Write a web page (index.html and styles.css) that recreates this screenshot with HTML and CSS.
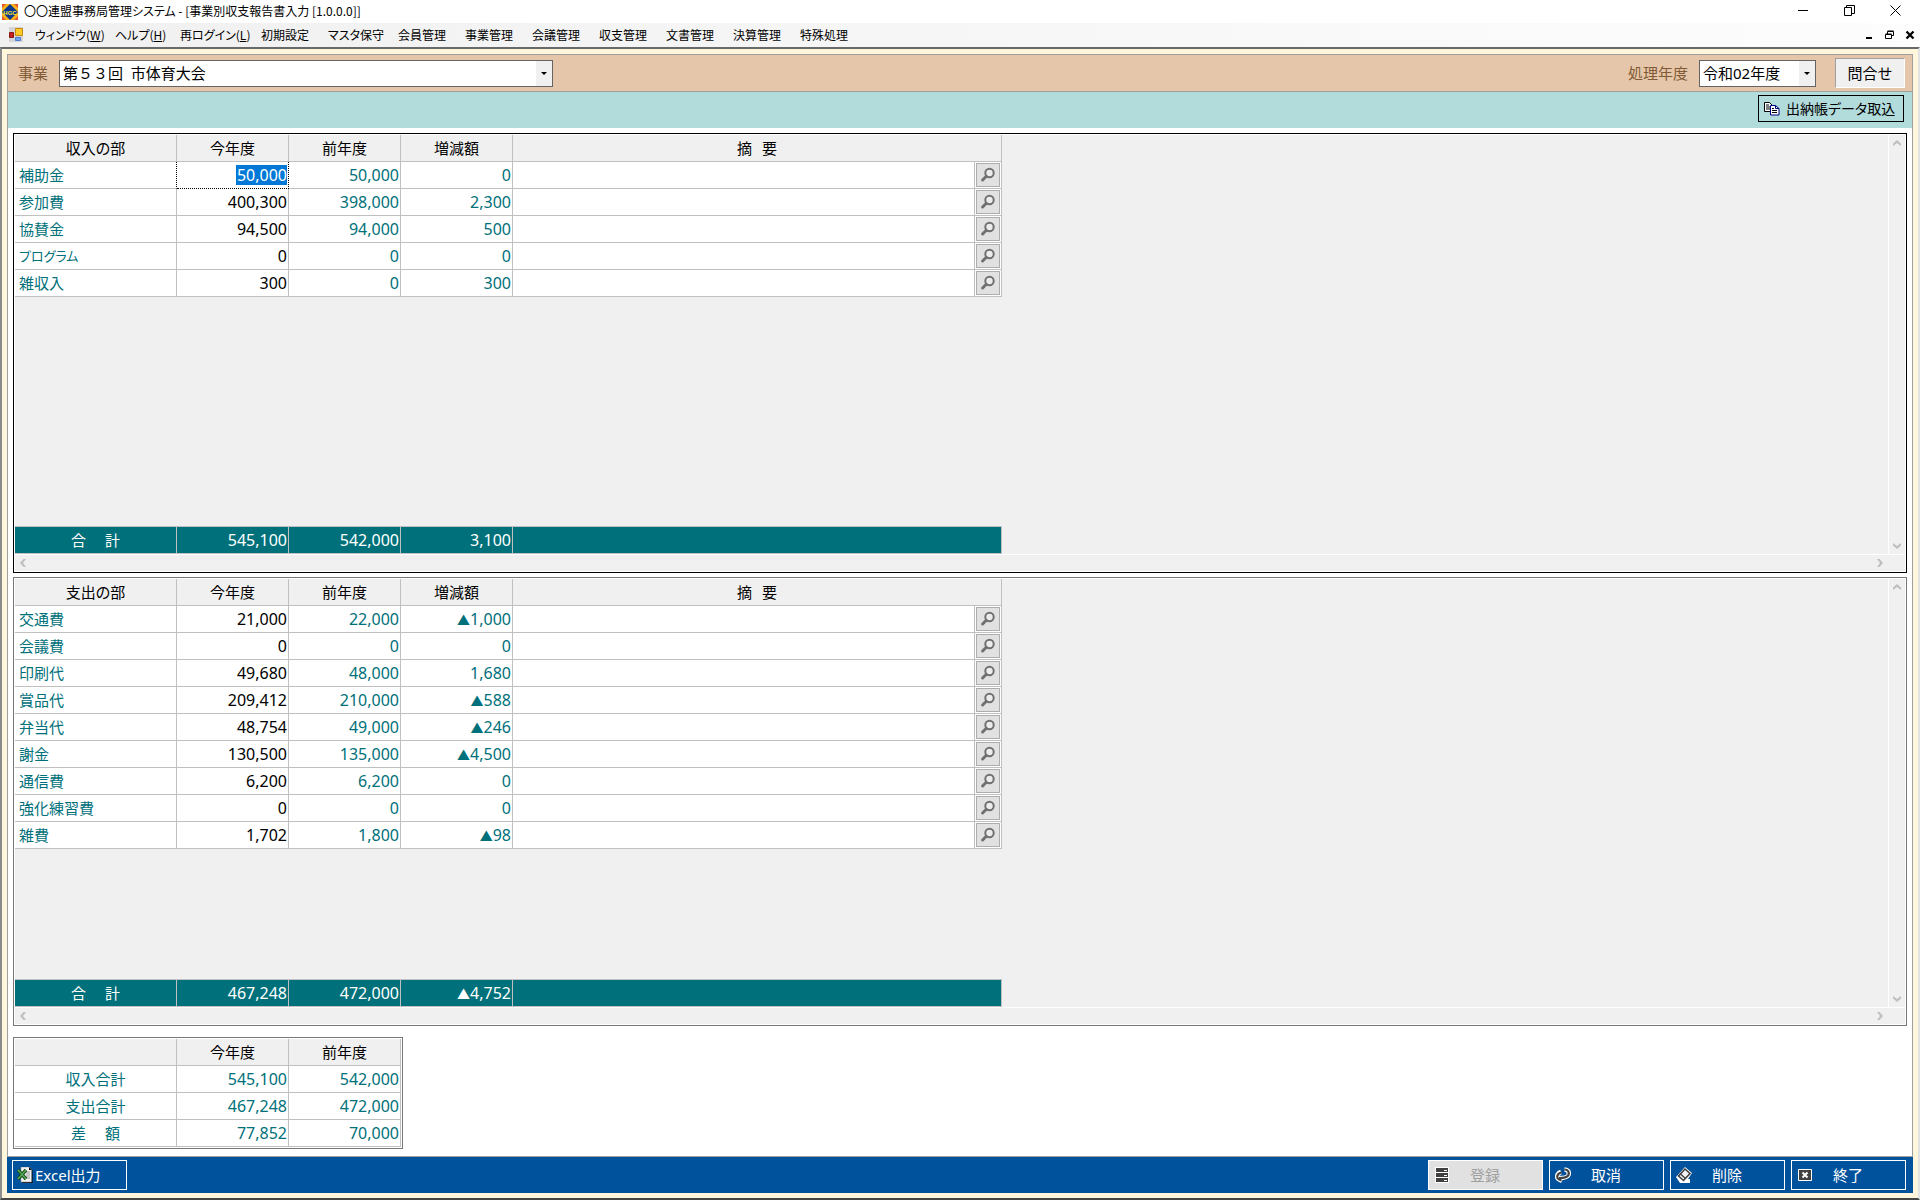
FILE: index.html
```html
<!DOCTYPE html>
<html lang="ja">
<head>
<meta charset="utf-8">
<meta name="viewport" content="width=device-width, initial-scale=1">
<title>〇〇連盟事務局管理システム</title>
<link rel="stylesheet" href="styles.css">
</head>
<body>
<svg class="defs" aria-hidden="true">
  <symbol id="lens" viewBox="0 0 22 22"><circle cx="12.5" cy="9" r="4.2" fill="#ececec" stroke="#707070" stroke-width="2"/><path d="M9.3 12.3 5.6 16" stroke="#707070" stroke-width="3" stroke-linecap="round"/></symbol>
  <symbol id="up" viewBox="0 0 16 16"><path d="M4 11V8.500L8 5l4 3.500V11L8 8z" fill="#bfbfbf"/></symbol>
</svg>
<header class="titlebar">
  <svg class="logo" viewBox="0 0 16 16" aria-hidden="true"><rect width="16" height="16" fill="#f6b21c"/><path d="M0 0h4L0 4zM12 0h4v4zM0 12v4h4zM16 12v4h-4z" fill="#e2542c"/><path d="M8 0l8 8-8 8-8-8z" fill="#08388c"/><text x="8" y="10.500" text-anchor="middle" class="logo-text">HGC</text></svg>
  <h1>〇〇連盟事務局管理システム - [事業別収支報告書入力 [1.0.0.0]]</h1>
  <div class="win-buttons">
    <button type="button" aria-label="最小化"><svg viewBox="0 0 11 11"><path d="M0 5.500h10" stroke="#000"/></svg></button>
    <button type="button" aria-label="元に戻す"><svg viewBox="0 0 11 11"><path d="M.5 2.500h7v8h-7zM2.500 2.500v-2h8v8h-3" fill="none" stroke="#000"/></svg></button>
    <button type="button" aria-label="閉じる"><svg viewBox="0 0 11 11"><path d="M.5.5l10 10M10.500.5l-10 10" stroke="#000"/></svg></button>
  </div>
</header>
<nav class="menubar">
  <svg class="form-icon" viewBox="0 0 14 15" aria-hidden="true"><path d="M0 0h14v15H0z" fill="#d4d4d8"/><path d="M6.500 1.500h7v7h-7z" fill="#ffc928" stroke="#c98a10"/><path d="M.5 5.500h4v5h-4z" fill="#c82020" stroke="#8c1414"/><path d="M6.500 10.500h5v3h-5z" fill="#6ea4f0" stroke="#4a7ccc"/></svg>
  <div class="menu">
    <a href="#">ウィンドウ(<u>W</u>)</a><a href="#">ヘルプ(<u>H</u>)</a><a href="#">再ログイン(<u>L</u>)</a><a href="#">初期設定</a><a href="#">マスタ保守</a><a href="#">会員管理</a><a href="#">事業管理</a><a href="#">会議管理</a><a href="#">収支管理</a><a href="#">文書管理</a><a href="#">決算管理</a><a href="#">特殊処理</a>
  </div>
  <div class="child-buttons">
    <button type="button" aria-label="子ウィンドウを最小化"><svg viewBox="0 0 10 10"><path d="M1 8h6" stroke="#000" stroke-width="2"/></svg></button>
    <button type="button" aria-label="子ウィンドウを元に戻す"><svg viewBox="0 0 10 10"><path d="M.5 4.500h6v4h-6zM2.500 4V1.500h6v4H7M.5 4h6M2.500 1h6" fill="none" stroke="#000"/></svg></button>
    <button type="button" aria-label="子ウィンドウを閉じる"><svg viewBox="0 0 10 10"><path d="M1.500 1.500l7 7M8.500 1.500l-7 7" stroke="#000" stroke-width="2.300"/></svg></button>
  </div>
</nav>
<div class="frame">
<div class="form">
  <div class="filter">
    <label for="project">事業</label>
    <span class="combo combo-project"><select id="project"><option>第５３回&nbsp;&nbsp;市体育大会</option></select><span class="drop"></span></span>
    <label class="year-label" for="year">処理年度</label>
    <span class="combo combo-year"><select id="year"><option>令和02年度</option></select><span class="drop"></span></span>
    <button type="button" class="inquiry">問合せ</button>
  </div>
  <div class="tools">
    <button type="button" class="import"><svg viewBox="0 0 16 14" aria-hidden="true"><path d="M.5.5h5l3 3v6h-8z" fill="#fff" stroke="#000"/><path d="M2 3h3M2 5h4M2 7h4" stroke="#000"/><path d="M6.500 3.500h5l3.500 3v6.500H6.500z" fill="#fff" stroke="#000080"/><path d="M11.500 3.500v3H15" fill="none" stroke="#000080"/><path d="M8 6.500h2M8 8.500h5M8 10.500h5" stroke="#000"/></svg>出納帳データ取込</button>
  </div>
  <main>
    <section class="panel panel-income">
      <div class="sheet">
        <table class="ledger">
          <colgroup><col class="c-name"><col class="c-num"><col class="c-num"><col class="c-num"><col class="c-note"><col class="c-find"></colgroup>
          <thead><tr><th class="kana">収入の部</th><th>今年度</th><th>前年度</th><th>増減額</th><th colspan="2" class="wide">摘<span></span>要</th></tr></thead>
          <tbody>
            <tr><th scope="row">補助金</th><td class="current"><input class="selected" aria-label="補助金" value="50,000"></td><td>50,000</td><td>0</td><td><input aria-label="摘要"></td><td class="find"><button type="button" aria-label="検索"><svg><use href="#lens"/></svg></button></td></tr>
            <tr><th scope="row">参加費</th><td><input aria-label="参加費" value="400,300"></td><td>398,000</td><td>2,300</td><td><input aria-label="摘要"></td><td class="find"><button type="button" aria-label="検索"><svg><use href="#lens"/></svg></button></td></tr>
            <tr><th scope="row">協賛金</th><td><input aria-label="協賛金" value="94,500"></td><td>94,000</td><td>500</td><td><input aria-label="摘要"></td><td class="find"><button type="button" aria-label="検索"><svg><use href="#lens"/></svg></button></td></tr>
            <tr><th scope="row" class="kana small">プログラム</th><td><input aria-label="プログラム" value="0"></td><td>0</td><td>0</td><td><input aria-label="摘要"></td><td class="find"><button type="button" aria-label="検索"><svg><use href="#lens"/></svg></button></td></tr>
            <tr><th scope="row">雑収入</th><td><input aria-label="雑収入" value="300"></td><td>0</td><td>300</td><td><input aria-label="摘要"></td><td class="find"><button type="button" aria-label="検索"><svg><use href="#lens"/></svg></button></td></tr>
          </tbody>
        </table>
        <table class="ledger total">
          <colgroup><col class="c-name"><col class="c-num"><col class="c-num"><col class="c-num"><col class="c-note"><col class="c-find"></colgroup>
          <tbody><tr><th scope="row" class="wider">合<span></span>計</th><td>545,100</td><td>542,000</td><td>3,100</td><td colspan="2"></td></tr></tbody>
        </table>
      </div>
      <div class="vbar"><svg><use href="#up"/></svg><svg class="down"><use href="#up"/></svg></div>
      <div class="hbar"><svg class="left"><use href="#up"/></svg><svg class="right"><use href="#up"/></svg></div>
    </section>
    <section class="panel panel-expense">
      <div class="sheet">
        <table class="ledger">
          <colgroup><col class="c-name"><col class="c-num"><col class="c-num"><col class="c-num"><col class="c-note"><col class="c-find"></colgroup>
          <thead><tr><th class="kana">支出の部</th><th>今年度</th><th>前年度</th><th>増減額</th><th colspan="2" class="wide">摘<span></span>要</th></tr></thead>
          <tbody>
            <tr><th scope="row">交通費</th><td><input aria-label="交通費" value="21,000"></td><td>22,000</td><td><i>▲</i>1,000</td><td><input aria-label="摘要"></td><td class="find"><button type="button" aria-label="検索"><svg><use href="#lens"/></svg></button></td></tr>
            <tr><th scope="row">会議費</th><td><input aria-label="会議費" value="0"></td><td>0</td><td>0</td><td><input aria-label="摘要"></td><td class="find"><button type="button" aria-label="検索"><svg><use href="#lens"/></svg></button></td></tr>
            <tr><th scope="row">印刷代</th><td><input aria-label="印刷代" value="49,680"></td><td>48,000</td><td>1,680</td><td><input aria-label="摘要"></td><td class="find"><button type="button" aria-label="検索"><svg><use href="#lens"/></svg></button></td></tr>
            <tr><th scope="row">賞品代</th><td><input aria-label="賞品代" value="209,412"></td><td>210,000</td><td><i>▲</i>588</td><td><input aria-label="摘要"></td><td class="find"><button type="button" aria-label="検索"><svg><use href="#lens"/></svg></button></td></tr>
            <tr><th scope="row">弁当代</th><td><input aria-label="弁当代" value="48,754"></td><td>49,000</td><td><i>▲</i>246</td><td><input aria-label="摘要"></td><td class="find"><button type="button" aria-label="検索"><svg><use href="#lens"/></svg></button></td></tr>
            <tr><th scope="row">謝金</th><td><input aria-label="謝金" value="130,500"></td><td>135,000</td><td><i>▲</i>4,500</td><td><input aria-label="摘要"></td><td class="find"><button type="button" aria-label="検索"><svg><use href="#lens"/></svg></button></td></tr>
            <tr><th scope="row">通信費</th><td><input aria-label="通信費" value="6,200"></td><td>6,200</td><td>0</td><td><input aria-label="摘要"></td><td class="find"><button type="button" aria-label="検索"><svg><use href="#lens"/></svg></button></td></tr>
            <tr><th scope="row">強化練習費</th><td><input aria-label="強化練習費" value="0"></td><td>0</td><td>0</td><td><input aria-label="摘要"></td><td class="find"><button type="button" aria-label="検索"><svg><use href="#lens"/></svg></button></td></tr>
            <tr><th scope="row">雑費</th><td><input aria-label="雑費" value="1,702"></td><td>1,800</td><td><i>▲</i>98</td><td><input aria-label="摘要"></td><td class="find"><button type="button" aria-label="検索"><svg><use href="#lens"/></svg></button></td></tr>
          </tbody>
        </table>
        <table class="ledger total">
          <colgroup><col class="c-name"><col class="c-num"><col class="c-num"><col class="c-num"><col class="c-note"><col class="c-find"></colgroup>
          <tbody><tr><th scope="row" class="wider">合<span></span>計</th><td>467,248</td><td>472,000</td><td><i>▲</i>4,752</td><td colspan="2"></td></tr></tbody>
        </table>
      </div>
      <div class="vbar"><svg><use href="#up"/></svg><svg class="down"><use href="#up"/></svg></div>
      <div class="hbar"><svg class="left"><use href="#up"/></svg><svg class="right"><use href="#up"/></svg></div>
    </section>
    <section class="summary">
      <table class="ledger balance">
        <colgroup><col class="c-name"><col class="c-num"><col class="c-num"></colgroup>
        <thead><tr><th></th><th>今年度</th><th>前年度</th></tr></thead>
        <tbody>
          <tr><th scope="row">収入合計</th><td>545,100</td><td>542,000</td></tr>
          <tr><th scope="row">支出合計</th><td>467,248</td><td>472,000</td></tr>
          <tr><th scope="row" class="wider">差<span></span>額</th><td>77,852</td><td>70,000</td></tr>
        </tbody>
      </table>
    </section>
  </main>
  <footer class="actions">
    <button type="button" class="excel"><svg viewBox="0 0 16 16" aria-hidden="true"><path d="M5 1h8l2.500 2.500V16H5z" fill="#000"/><path d="M4 0h8l2.500 3V15H4z" fill="#f4f4f4" stroke="#999" stroke-width=".6"/><path d="M12 0v3h2.500z" fill="#000"/><path d="M9 5h4M9 7h4M9 9h4M9 11h4" stroke="#999"/><path d="M1 3l8 9M9 3l-8 9" stroke="#154f1c" stroke-width="3.400"/><path d="M1 3l8 9M9 3l-8 9" stroke="#58a858" stroke-width="1.500"/></svg>Excel出力</button>
    <button type="button" class="first" disabled><svg viewBox="0 0 16 16" aria-hidden="true"><path d="M1 0h14v16H1z" fill="#fff"/><path d="M2 1h12v4H2zM2 6h12v4H2zM2 11h12v4H2z" fill="#404040"/><path d="M10 3.500h3M10 8.500h3M10 13.500h3" stroke="#fff"/></svg><span>登録</span></button>
    <button type="button"><svg viewBox="0 0 16 16" aria-hidden="true"><g fill="none" stroke="#fff" stroke-width="4.500"><path d="M9.500 2.500C13 2.500 14.500 5 13.500 8c-1 2.500-4 3-9.500 3"/><path d="M6 5C3 6 1.500 8.500 2.500 11c1 1.500 2.500 2 4.500 3"/></g><g fill="none" stroke="#404040" stroke-width="2.200"><path d="M9.500 2.500C13 2.500 14.500 5 13.500 8c-1 2.500-4 3-9.500 3"/><path d="M6.500 5.500C3.500 6 1.500 8.500 2.500 11c1 1.500 2.500 2 4 2.500"/></g></svg><span>取消</span></button>
    <button type="button"><svg viewBox="0 0 16 16" aria-hidden="true"><path d="M9 0l7 6-4 6h2v4H4L0 10z" fill="#fff"/><path d="M9 2l5 4.500-6.500 7L2.500 9z" fill="#f4f4f4" stroke="#404040" stroke-width="1.600"/><path d="M4.500 7l5 4.500" stroke="#404040" stroke-width="1.400"/></svg><span>削除</span></button>
    <button type="button"><svg viewBox="0 0 16 16" aria-hidden="true"><path d="M1.500 2.500h13v11h-13z" fill="#404040" stroke="#fff"/><path d="M5.500 5.500l5 5M10.500 5.500l-5 5" stroke="#fff" stroke-width="2"/></svg><span>終了</span></button>
  </footer>
</div>
</div>
</body>
</html>
```

FILE: styles.css
```css
* { box-sizing: border-box; }

body {
  margin: 0;
  min-height: 100vh;
  display: flex;
  flex-direction: column;
  background: #fff;
  color: #000;
  font: 15px/20px "Noto Sans", "Noto Sans CJK JP", sans-serif;
}

button, input, select {
  font: inherit;
  color: inherit;
  margin: 0;
  padding: 0;
  border: 0;
  border-radius: 0;
  background: none;
}

.defs { display: none; }
.kana { font-feature-settings: "palt"; }

/* Title bar */
.titlebar {
  height: 23px;
  display: flex;
  align-items: center;
  padding: 0 19px 2px 2px;
}
.titlebar h1 {
  margin: 0 0 0 6px;
  font: 12px/20px "Liberation Sans Narrow", "Noto Sans CJK JP", sans-serif;
  font-feature-settings: "palt";
}
.logo { width: 16px; height: 16px; margin-top: 2px; }
.logo-text { font: bold 6px "Liberation Sans", sans-serif; fill: #ffe92e; }
.win-buttons { margin-left: auto; display: flex; gap: 35px; }
.win-buttons button { width: 11px; height: 11px; display: block; }
.win-buttons svg { width: 11px; height: 11px; display: block; }

/* Menu bar */
.menubar {
  height: 24px;
  display: flex;
  align-items: center;
  padding: 0 5px 1px 9px;
  background: linear-gradient(to right, #f0f0f0, #fdfdfd);
}
.form-icon { width: 14px; height: 15px; }
.menu {
  margin-left: 12px;
  display: grid;
  grid-template-columns: 80px 65px 81px 67px 70px repeat(7, 67px);
}
.menu a {
  font: 12px/20px "Noto Sans CJK JP", sans-serif;
  font-feature-settings: "palt";
  color: #000;
  text-decoration: none;
  white-space: nowrap;
}
.child-buttons { margin-left: auto; display: flex; gap: 10px; }
.child-buttons button, .child-buttons svg { width: 10px; height: 10px; display: block; }

/* Window frame */
.frame {
  flex: 1;
  display: flex;
  padding: 5px;
  background: #fff6dc;
  border: 2px solid;
  border-color: #696969 #e3e3e3 #444 #8c8c8c;
}
.form {
  flex: 1;
  display: flex;
  flex-direction: column;
  background: #fff;
  border: 1px solid #a0a0a0;
  border-bottom: 0;
}

.filter {
  height: 37px;
  display: flex;
  align-items: center;
  padding: 0 7px 0 10px;
  background: #e6c6aa;
  border-bottom: 1px solid #a0a0a0;
  color: #7f5a34;
}
.combo {
  display: grid;
  height: 27px;
  margin-left: 11px;
  border: 1px solid #646464;
  background: #fff;
  color: #000;
}
.combo select, .drop { grid-area: 1 / 1; }
.combo select { width: 100%; appearance: none; padding-left: 3px; }
.drop {
  justify-self: end;
  width: 16px;
  display: grid;
  place-items: center;
  background: #f0f0f0;
  pointer-events: none;
}
.drop::before {
  content: "";
  border: 3px solid transparent;
  border-top-color: #000;
  border-bottom: 0;
}
.combo-project { width: 494px; }
.combo-year { width: 117px; }
.year-label { margin-left: auto; }
.inquiry {
  width: 70px;
  height: 30px;
  margin-left: 19px;
  background: #f0f0f0;
  color: #000;
  border: 1px solid;
  border-color: #a0a0a0 #fff #fff #a0a0a0;
}

.tools {
  height: 36px;
  display: flex;
  justify-content: flex-end;
  align-items: flex-start;
  padding: 3px 8px 0;
  background: #b2dbdc;
}
.import {
  width: 146px;
  height: 27px;
  display: flex;
  align-items: center;
  gap: 6px;
  padding-left: 5px;
  border: 1px solid #000;
  white-space: nowrap;
  font-size: 14px;
  font-feature-settings: "palt";
}
.import svg { width: 16px; height: 14px; flex: none; }

/* Panels */
main {
  flex: 1;
  display: flex;
  flex-direction: column;
  padding: 5px 5px 7px;
}
.panel {
  display: grid;
  grid-template-columns: 1fr 16px;
  grid-template-rows: 1fr 16px;
  gap: 1px;
  padding: 1px;
  background: #fff;
  border: 1px solid #777;
}
.panel-income { flex: 440 1 0; border-color: #000; }
.panel-expense { flex: 449 1 0; margin-top: 4px; }
.sheet {
  display: flex;
  flex-direction: column;
  justify-content: space-between;
  background: #f0f0f0;
}
.vbar, .hbar { display: flex; justify-content: space-between; background: #f0f0f0; }
.vbar { flex-direction: column; }
.hbar { grid-column: 1 / 3; padding-right: 17px; }
.vbar svg, .hbar svg { width: 16px; height: 16px; display: block; }
.down { transform: rotate(180deg); }
.left { transform: rotate(-90deg); }
.right { transform: rotate(90deg); }

/* Ledger tables */
.ledger {
  table-layout: fixed;
  width: 987px;
  border-spacing: 0;
}
.c-name { width: 162px; }
.c-num { width: 112px; }
.c-note { width: 462px; }
.c-find { width: 27px; }
.ledger th, .ledger td {
  height: 27px;
  padding: 0;
  border: solid #c0c0c0;
  border-width: 0 1px 1px 0;
  font-weight: normal;
  white-space: nowrap;
}
.ledger thead th { background: #f0f0f0; }
.ledger tbody th { padding-left: 4px; text-align: left; background: #fff; color: #00707a; }
.ledger th.small { font-size: 13px; }
.ledger td {
  padding-right: 1px;
  text-align: right;
  font-size: 16px;
  background: #fff;
  color: #00707a;
}
.ledger td input {
  display: block;
  width: 100%;
  height: 20px;
  margin-left: auto;
  text-align: right;
  color: #000;
}
.ledger td input.selected { width: 51px; background: #0078d7; color: #fff; }
.ledger td.current { border-right: 1px dotted #000; border-bottom: 1px dotted #000; }
.ledger th:has(+ .current) { border-right: 1px dotted #000; }
.ledger i { font: 13px/20px "Noto Sans CJK JP", sans-serif; }
.ledger td.find { padding: 1px; }
.find button {
  display: block;
  width: 24px;
  height: 24px;
  background: #e1e1e1;
  border: 1px solid #adadad;
}
.find svg { display: block; width: 22px; height: 22px; }
.wide span { display: inline-block; width: 10px; }
.wider span { display: inline-block; width: 19px; }

.ledger.total th, .ledger.total td {
  height: 28px;
  border-top-width: 1px;
  background: #00707a;
  color: #fff;
}
.ledger.total tbody th, .ledger.balance tbody th { padding: 0; text-align: center; }

.summary { margin-top: 11px; display: flex; }
.balance { width: 390px; padding: 1px; border: 1px solid #777; }

/* Action bar */
.actions {
  height: 37px;
  display: flex;
  align-items: flex-start;
  gap: 6px;
  margin: 0 -1px;
  padding: 3px 7px 0 5px;
  background: #00529c;
  border-top: 1px solid #a0a0a0;
}
.actions button {
  width: 115px;
  height: 30px;
  display: flex;
  align-items: center;
  padding: 0 5px 1px;
  border: 1px solid #fff;
  color: #fff;
}
.actions svg { width: 16px; height: 16px; flex: none; }
.actions span { margin-left: 20px; }
.actions .excel { gap: 2px; padding: 0 4px 1px; }
.actions .first { margin-left: auto; background: #e1e1e1; color: #a0a0a0; }
```
